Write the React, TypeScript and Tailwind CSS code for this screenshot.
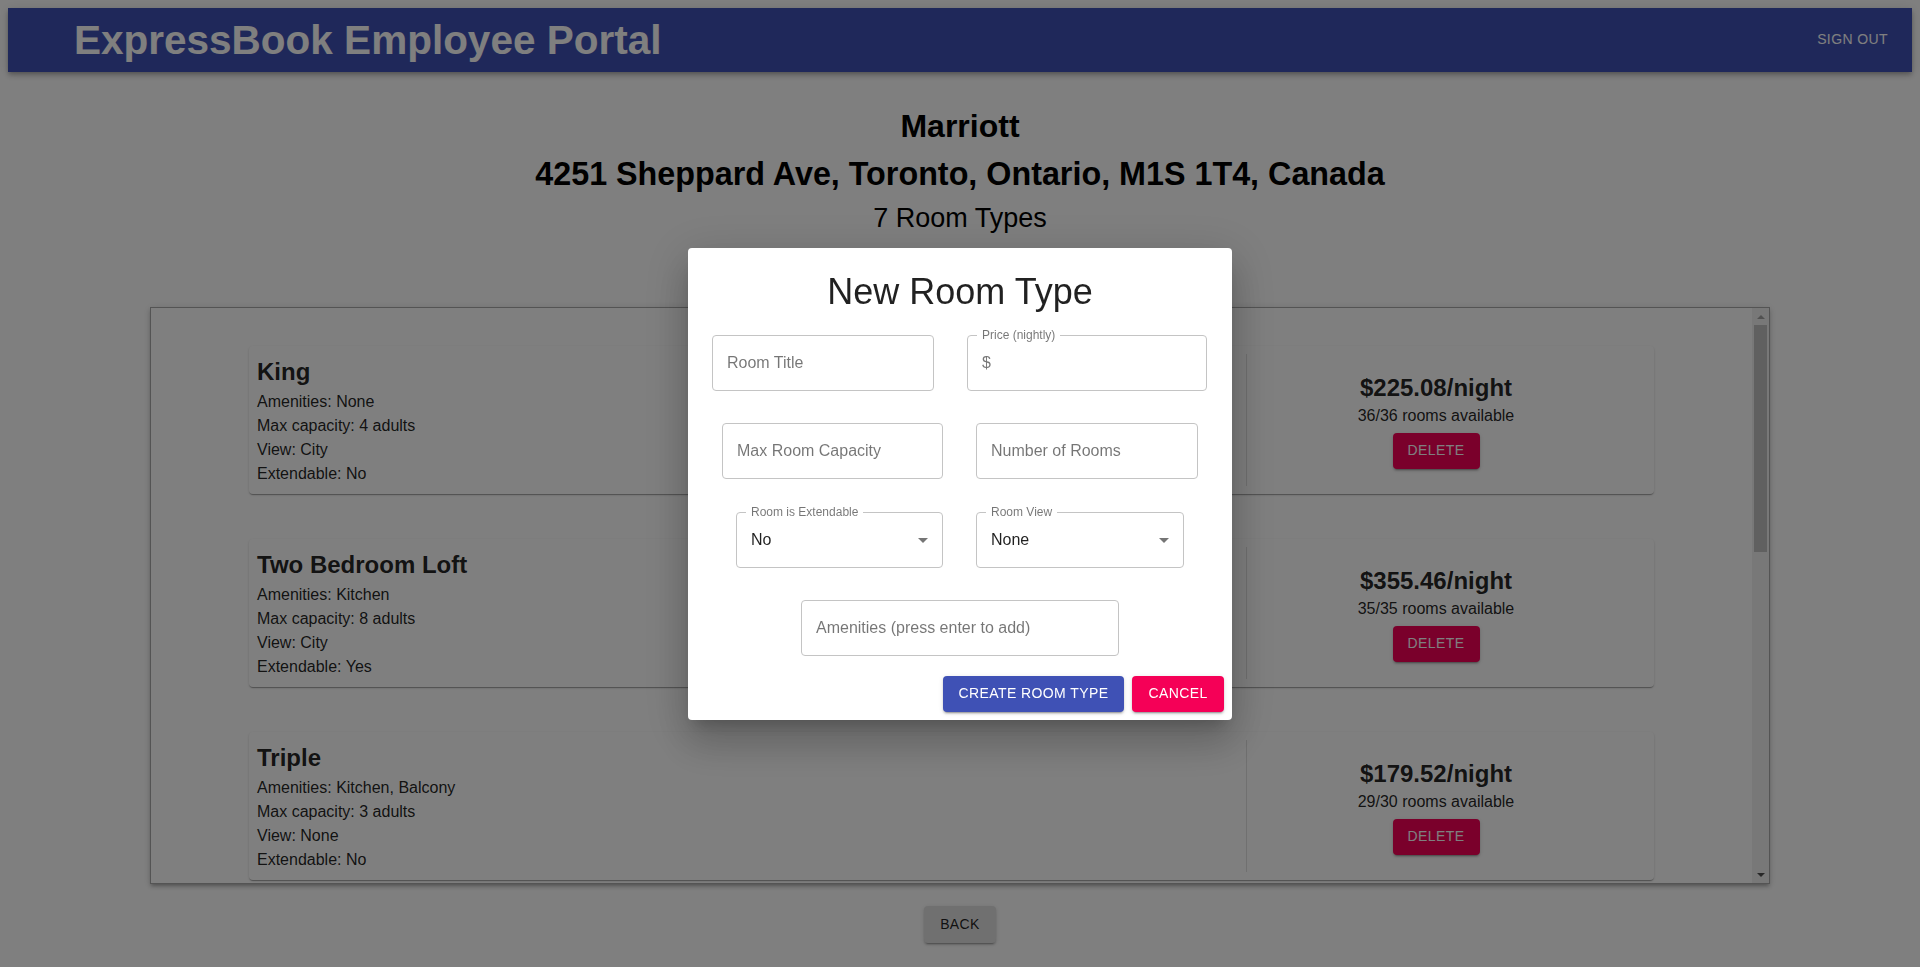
import React from 'react';

type RoomType = {
  title: string;
  amenities: string;
  capacity: number;
  view: string;
  extendable: string;
  price: string;
  available: string;
};

const rooms: RoomType[] = [
  { title: 'King', amenities: 'None', capacity: 4, view: 'City', extendable: 'No', price: '$225.08', available: '36/36' },
  { title: 'Two Bedroom Loft', amenities: 'Kitchen', capacity: 8, view: 'City', extendable: 'Yes', price: '$355.46', available: '35/35' },
  { title: 'Triple', amenities: 'Kitchen, Balcony', capacity: 3, view: 'None', extendable: 'No', price: '$179.52', available: '29/30' },
];

const RoomCard: React.FC<{ room: RoomType }> = ({ room }) => (
  <div className="mx-auto flex w-[1405px] shrink-0 rounded bg-white p-2 shadow-[0_2px_1px_-1px_rgba(0,0,0,0.2),0_1px_1px_0_rgba(0,0,0,0.14),0_1px_3px_0_rgba(0,0,0,0.12)]">
    <div className="flex-1 text-left text-[#000000de]">
      <div className="text-[24px] font-bold leading-[36px]">{room.title}</div>
      <div className="text-[16px] leading-6">Amenities: {room.amenities}</div>
      <div className="text-[16px] leading-6">Max capacity: {room.capacity} adults</div>
      <div className="text-[16px] leading-6">View: {room.view}</div>
      <div className="text-[16px] leading-6">Extendable: {room.extendable}</div>
    </div>
    <div className="flex w-[400px] flex-col items-center justify-center border-l border-[#0000001f] pr-[21px] text-[#000000de]">
      <div className="text-[24px] font-bold leading-8">{room.price}/night</div>
      <div className="text-[16px] leading-6">{room.available} rooms available</div>
      <button className="mt-[5px] h-9 w-[87px] rounded bg-[#f50057] text-[14px] uppercase tracking-[0.4px] text-white shadow-[0_3px_1px_-2px_rgba(0,0,0,0.2),0_2px_2px_0_rgba(0,0,0,0.14),0_1px_5px_0_rgba(0,0,0,0.12)]">
        Delete
      </button>
    </div>
  </div>
);

const ArrowDrop: React.FC = () => (
  <svg viewBox="0 0 24 24" className="h-6 w-6 fill-[#0000008a]">
    <path d="M7 10l5 5 5-5z" />
  </svg>
);

const TextBox: React.FC<{ label: string; width: string }> = ({ label, width }) => (
  <div className={`flex h-[56px] items-center rounded border border-[#c4c4c4] pl-[14px] ${width}`}>
    <span className="text-[16px] text-[#0000008a]">{label}</span>
  </div>
);

const SelectBox: React.FC<{ label: string; value: string; width: string }> = ({ label, value, width }) => (
  <div className={`relative flex h-[56px] items-center justify-between rounded border border-[#c4c4c4] pl-[14px] pr-[7px] ${width}`}>
    <span className="absolute -top-[7px] left-[9px] bg-white px-[5px] text-[12px] leading-[12px] text-[#0000008a]">{label}</span>
    <span className="text-[16px] text-[#000000de]">{value}</span>
    <ArrowDrop />
  </div>
);

const ScrollTrack: React.FC = () => (
  <div className="flex w-[17px] shrink-0 flex-col bg-[#f1f1f1]">
    <div className="flex h-[17px] items-center justify-center">
      <svg viewBox="0 0 8 4" className="h-[4px] w-[8px] fill-[#a3a3a3]">
        <path d="M0 4L4 0L8 4z" />
      </svg>
    </div>
    <div className="mx-[2px] h-[227px] bg-[#c1c1c1]" />
    <div className="flex-1" />
    <div className="flex h-[17px] items-center justify-center">
      <svg viewBox="0 0 8 4" className="h-[4px] w-[8px] fill-[#505050]">
        <path d="M0 0L8 0L4 4z" />
      </svg>
    </div>
  </div>
);

export default function App() {
  return (
    <div className="m-2 font-['Liberation_Sans',Arial,sans-serif]">
      <header className="flex h-16 items-center justify-between bg-[#3f51b5] pb-[1px] pl-[66px] pr-4 text-white shadow-[0_2px_4px_-1px_rgba(0,0,0,0.2),0_4px_5px_0_rgba(0,0,0,0.14),0_1px_10px_0_rgba(0,0,0,0.12)]">
        <h1 className="text-[40.5px] font-bold leading-[46px]">ExpressBook Employee Portal</h1>
        <button className="px-2 py-[6px] text-[14px] uppercase tracking-[0.4px]">Sign Out</button>
      </header>

      <main className="flex flex-col items-center">
        <h2 className="mt-[30px] text-[32px] font-bold leading-[48px] text-black">Marriott</h2>
        <h2 className="text-[32.3px] font-bold leading-[48px] text-black">4251 Sheppard Ave, Toronto, Ontario, M1S 1T4, Canada</h2>
        <h3 className="text-[27px] leading-[40px] text-black">7 Room Types</h3>

        <div className="mt-[69px] flex h-[577px] w-[1620px] overflow-hidden border border-[#a8a8a8] bg-white shadow-[0_3px_3px_-2px_rgba(0,0,0,0.2),0_3px_4px_0_rgba(0,0,0,0.14),0_1px_8px_0_rgba(0,0,0,0.12)]">
          <div className="flex flex-1 flex-col gap-[45px] pt-[38px]">
            {rooms.map((r) => (
              <RoomCard key={r.title} room={r} />
            ))}
          </div>
          <ScrollTrack />
        </div>

        <button className="mt-[22px] h-[37px] w-[72px] rounded bg-[#e0e0e0] text-[14px] uppercase tracking-[0.4px] text-[#000000de] shadow-[0_3px_1px_-2px_rgba(0,0,0,0.2),0_2px_2px_0_rgba(0,0,0,0.14),0_1px_5px_0_rgba(0,0,0,0.12)]">
          Back
        </button>
      </main>

      {/* dialog backdrop */}
      <div className="fixed inset-0 z-10 flex items-center justify-center bg-black/50">
        <div className="flex w-[544px] flex-col rounded bg-white pb-2 pt-[23px] shadow-[0_11px_15px_-7px_rgba(0,0,0,0.2),0_24px_38px_3px_rgba(0,0,0,0.14),0_9px_46px_8px_rgba(0,0,0,0.12)]">
          <h2 className="text-center text-[36px] leading-[42px] text-[#000000de]">New Room Type</h2>

          <div className="mt-[22px] flex justify-between pl-6 pr-[25px]">
            <TextBox label="Room Title" width="w-[222px]" />
            <div className="relative flex h-[56px] w-[240px] items-center rounded border border-[#c4c4c4] pl-[14px]">
              <span className="absolute -top-[7px] left-[9px] bg-white px-[5px] text-[12px] leading-[12px] text-[#0000008a]">Price (nightly)</span>
              <span className="text-[16px] text-[#0000008a]">$</span>
            </div>
          </div>

          <div className="mt-[32px] flex justify-center gap-[33px]">
            <TextBox label="Max Room Capacity" width="w-[221px]" />
            <TextBox label="Number of Rooms" width="w-[222px]" />
          </div>

          <div className="mt-[33px] flex justify-center gap-[33px]">
            <SelectBox label="Room is Extendable" value="No" width="w-[207px]" />
            <SelectBox label="Room View" value="None" width="w-[208px]" />
          </div>

          <div className="mt-[32px] flex justify-center">
            <TextBox label="Amenities (press enter to add)" width="w-[318px]" />
          </div>

          <div className="mt-[20px] flex justify-end gap-2 pr-2">
            <button className="h-9 w-[181px] rounded bg-[#3f51b5] text-[14px] uppercase tracking-[0.4px] text-white shadow-[0_3px_1px_-2px_rgba(0,0,0,0.2),0_2px_2px_0_rgba(0,0,0,0.14),0_1px_5px_0_rgba(0,0,0,0.12)]">
              Create Room Type
            </button>
            <button className="h-9 w-[92px] rounded bg-[#f50057] text-[14px] uppercase tracking-[0.4px] text-white shadow-[0_3px_1px_-2px_rgba(0,0,0,0.2),0_2px_2px_0_rgba(0,0,0,0.14),0_1px_5px_0_rgba(0,0,0,0.12)]">
              Cancel
            </button>
          </div>
        </div>
      </div>
    </div>
  );
}
